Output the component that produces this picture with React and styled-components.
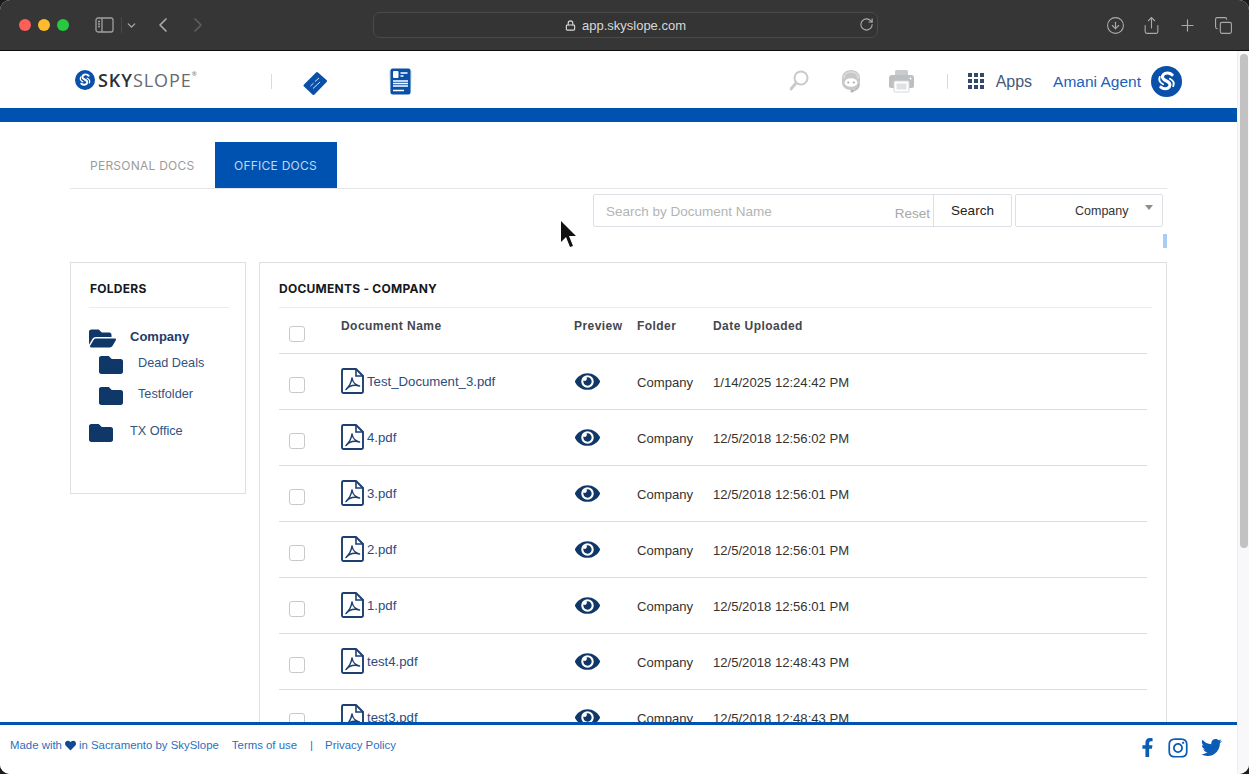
import React from 'react';
import styled, { createGlobalStyle } from 'styled-components';
import { FaEye, FaFolder, FaFolderOpen, FaHeart, FaFacebookF, FaInstagram, FaTwitter } from 'react-icons/fa';
import { ChevronDown, ChevronLeft, ChevronRight, RotateCw, Lock, CircleArrowDown, Share, Plus, Copy } from 'lucide-react';

const Global = createGlobalStyle`
  html, body { margin: 0; height: 100%; overflow: hidden; background: #1c1c1c; }
  #root { height: 100%; }
  * { box-sizing: border-box; }
  body { font-family: "Liberation Sans", Arial, sans-serif; }
`;

const Window = styled.div`
  position: relative;
  height: 774px;
  display: flex;
  flex-direction: column;
  border-radius: 10px;
  overflow: hidden;
  background: #fff;
`;

/* browser toolbar */
const Chrome = styled.div`
  height: 51px;
  flex: none;
  display: flex;
  align-items: center;
  background: #363636;
  border-bottom: 1px solid #0c0c0c;
  color: #a9a9a9;
`;
const ChromeLeft = styled.div`
  width: 373px;
  flex: none;
  display: flex;
  align-items: center;
  padding-left: 19px;
`;
const Light = styled.span`
  width: 12px;
  height: 12px;
  border-radius: 50%;
  margin-right: 7px;
  background: ${p => p.$c};
`;
const SidebarIcon = styled.svg`
  margin-left: 19px;
  width: 19px;
  height: 16px;
`;
const ChromeSep = styled.span`
  width: 1px;
  height: 16px;
  background: #484848;
  margin: 0 3px 0 7px;
`;
const Address = styled.div`
  width: 505px;
  height: 26px;
  flex: none;
  display: flex;
  align-items: center;
  justify-content: center;
  position: relative;
  gap: 6px;
  border: 1px solid #4a4a4a;
  border-radius: 7px;
  background: #343434;
  color: #d8d8d8;
  font-size: 13px;
`;
const Reload = styled.span`
  position: absolute;
  right: 3px;
  top: 4px;
  color: #b0b0b0;
`;
const ChromeRight = styled.div`
  flex: 1;
  display: flex;
  align-items: center;
  justify-content: flex-end;
  gap: 17px;
  padding-right: 16px;
`;

/* page + scrollbar */
const Viewport = styled.div`
  flex: 1;
  min-height: 0;
  display: flex;
`;
const Scrollbar = styled.div`
  width: 12px;
  flex: none;
  background: #f8f8fa;
  border-left: 1px solid #efeff2;
  padding: 3px 1px 0 2px;
`;
const Thumb = styled.div`
  height: 494px;
  border-radius: 5px;
  background: #c2c2c2;
`;
const Page = styled.div`
  flex: 1;
  min-width: 0;
  display: flex;
  flex-direction: column;
`;

/* app header */
const Header = styled.header`
  height: 57px;
  flex: none;
  display: flex;
  align-items: center;
  background: #fff;
  padding: 3px 55px 0 75px;
`;
const Logo = styled.div`
  width: 196px;
  display: flex;
  align-items: center;
  gap: 3px;
  margin-bottom: 3px;
`;
const LogoText = styled.span`
  font-family: "Open Sans", sans-serif;
  font-size: 18px;
  letter-spacing: 0.95px;
  color: #666a70;
  line-height: 1;
  b { font-weight: 600; color: #2b2f36; }
  sup { font-size: 6px; vertical-align: top; letter-spacing: 0; }
`;
const VSep = styled.span`
  width: 1px;
  height: 15px;
  background: #d8dbe2;
  flex: none;
`;
const NavIcon = styled.svg`
  flex: none;
  margin: ${p => p.$mt}px 0 0 ${p => p.$ml}px;
`;
const HeaderRight = styled.div`
  margin-left: auto;
  display: flex;
  align-items: center;
`;
const IconSlot = styled.span`
  display: flex;
  margin-right: ${p => p.$mr}px;
`;
const AppsGrid = styled.span`
  display: grid;
  grid-template-columns: repeat(3, 4px);
  grid-auto-rows: 4px;
  gap: 2px;
  margin: 0 12px 0 20px;
  i { background: #2f4a6d; display: block; }
`;
const AppsLabel = styled.span`
  font-size: 16px;
  color: #43597a;
  margin-right: 21px;
  padding-top: 1px;
`;
const UserName = styled.span`
  font-size: 15.5px;
  color: #1b61b8;
  margin-right: 10px;
  padding-top: 1px;
`;
const BlueBar = styled.div`
  height: 14px;
  flex: none;
  background: #0052b0;
`;

/* content */
const Main = styled.main`
  flex: 1;
  min-height: 0;
  overflow: hidden;
  padding: 20px 70px 0;
`;
const Tabs = styled.div`
  display: flex;
  height: 47px;
  border-bottom: 1px solid #e6e6e6;
`;
const Tab = styled.div`
  height: 46px;
  padding: 0 ${p => (p.$active ? 19.5 : 20)}px;
  display: flex;
  align-items: center;
  font-family: Inter, sans-serif;
  font-size: 12px;
  letter-spacing: 0.25px;
  color: ${p => (p.$active ? '#c4d6ee' : '#9b9b9b')};
  background: ${p => (p.$active ? '#0052b0' : 'transparent')};
`;
const SearchRow = styled.div`
  display: flex;
  justify-content: flex-end;
  gap: 3px;
  padding: 5px 4px 0 0;
`;
const SearchBox = styled.div`
  width: 419px;
  height: 33px;
  display: flex;
  border: 1px solid #dcdfe4;
  border-radius: 2px;
`;
const SearchInput = styled.div`
  flex: 1;
  position: relative;
  padding: 9px 0 0 12px;
  font-size: 13.5px;
  color: #b4b4b4;
`;
const Reset = styled.span`
  position: absolute;
  right: 3px;
  top: 11px;
  font-size: 13.5px;
  color: #a8a8a8;
`;
const SearchButton = styled.div`
  width: 78px;
  border-left: 1px solid #dcdfe4;
  display: flex;
  align-items: center;
  justify-content: center;
  font-size: 13.5px;
  color: #222;
  padding-bottom: 1px;
`;
const Select = styled.div`
  width: 148px;
  height: 33px;
  display: flex;
  align-items: center;
  padding-left: 59px;
  position: relative;
  border: 1px solid #dcdfe4;
  border-radius: 2px;
  font-size: 12.5px;
  color: #333;
  &::after {
    content: '';
    position: absolute;
    right: 9px;
    top: 10px;
    border: 4px solid transparent;
    border-top: 5px solid #8d8d8d;
  }
`;
const Marker = styled.div`
  width: 4px;
  height: 14px;
  margin: 7px 0 14px auto;
  background: #a9cdf5;
`;
const Columns = styled.div`
  display: flex;
  gap: 13px;
  align-items: flex-start;
`;
const FolderPanel = styled.aside`
  width: 176px;
  height: 232px;
  flex: none;
  padding: 0 16px 0 18px;
  border: 1px solid #dfdfe2;
`;
const PanelTitle = styled.h3`
  margin: 0;
  height: 45px;
  padding: 19px 0 0 1px;
  font-family: Inter, sans-serif;
  font-size: 12px;
  line-height: 14px;
  font-weight: 700;
  letter-spacing: 0.25px;
  color: #15181d;
  border-bottom: 1px solid #ececec;
`;
const FolderRow = styled.div`
  display: flex;
  align-items: center;
  margin-top: ${p => p.$mt}px;
  padding-left: ${p => p.$indent}px;
  color: #0f3868;
`;
const FolderSlot = styled.span`
  width: ${p => p.$w}px;
  flex: none;
  display: flex;
`;
const FolderLabel = styled.span`
  font-size: ${p => (p.$bold ? 13 : 12.7)}px;
  font-weight: ${p => (p.$bold ? 700 : 400)};
  color: ${p => (p.$bold ? '#1c3d6e' : '#33527f')};
  padding-bottom: 4px;
`;
const DocPanel = styled.section`
  flex: 1;
  min-width: 0;
  height: 521px;
  padding: 0 19px;
  border: 1px solid #dfdfe2;
`;
const DocTitle = styled(PanelTitle)`
  margin-right: -5px;
  padding-left: 0;
`;
const Row = styled.div`
  display: grid;
  grid-template-columns: 62px 233px 63px 76px 1fr;
  align-items: center;
  height: ${p => (p.$head ? 46 : 56)}px;
  border-bottom: 1px solid #d9dce8;
`;
const Check = styled.span`
  width: 16px;
  height: 16px;
  margin: 6px 0 0 10px;
  border: 1px solid #c9c9c9;
  border-radius: 3px;
  background: #fff;
`;
const HeadCell = styled.span`
  font-size: 12px;
  font-weight: 700;
  letter-spacing: 0.45px;
  color: #44474d;
  padding-bottom: 10px;
`;
const NameCell = styled.span`
  display: flex;
  align-items: center;
  gap: 3px;
  font-size: 13.2px;
  color: #2b4c7e;
`;
const Pdf = styled.svg`
  width: 23px;
  height: 26px;
  flex: none;
  margin-top: -1px;
`;
const TextLabel = styled.span`
  padding-bottom: 1px;
`;
const EyeCell = styled.span`
  display: flex;
  color: #0f3868;
  padding-left: 1px;
`;
const Cell = styled.span`
  font-size: 13.1px;
  color: #333;
  padding-top: 1px;
`;

/* footer */
const Footer = styled.footer`
  height: 52px;
  flex: none;
  display: flex;
  align-items: center;
  background: #fff;
  border-top: 3px solid #0052b0;
  padding: 0 15px 4px 10px;
  font-size: 11.4px;
  color: #2a6fc0;
`;
const FooterLink = styled.span`
  margin: 0 0 5px ${p => p.$ml || 0}px;
  display: flex;
  align-items: center;
  gap: 3px;
`;
const Social = styled.div`
  margin-left: auto;
  display: flex;
  align-items: center;
  gap: 12px;
  color: #0b5cb5;
`;
const FacebookSlot = styled.span`
  display: flex;
  margin-right: -2px;
`;

const Cursor = styled.svg`
  position: absolute;
  left: 560px;
  top: 220px;
  width: 17px;
  height: 28px;
`;

const docs = [
  ['Test_Document_3.pdf', '1/14/2025 12:24:42 PM'],
  ['4.pdf', '12/5/2018 12:56:02 PM'],
  ['3.pdf', '12/5/2018 12:56:01 PM'],
  ['2.pdf', '12/5/2018 12:56:01 PM'],
  ['1.pdf', '12/5/2018 12:56:01 PM'],
  ['test4.pdf', '12/5/2018 12:48:43 PM'],
  ['test3.pdf', '12/5/2018 12:48:43 PM'],
];

const PdfIcon = () => (
  <Pdf viewBox="0 0 23 26" fill="none" stroke="#1b3f70" strokeWidth="1.900">
    <path d="M2.500 1h12.500l7 7v15.500a1.500 1.500 0 0 1-1.500 1.500H2.500A1.500 1.500 0 0 1 1 23.500V2.500A1.500 1.500 0 0 1 2.500 1z" />
    <path d="M15 1v7h7" strokeWidth="1.600" />
    <path d="M11 10c-.5 4-3 8.500-6 11.500M11 10c.5 3.500 3.500 7 7.500 8M5 21.500c3-3.500 8-5 13.500-3.500" strokeWidth="1.500" strokeLinecap="round" />
  </Pdf>
);

const SLogo = ({ size }) => (
  <svg width={size} height={size} viewBox="0 0 30 30">
    <circle cx="15" cy="15" r="15" fill="#0a50a8" />
    <path d="M20.500 8.500c-2.500-2.300-6.500-2.300-8.500-.3-2 2.200-.8 4.600 2.500 6.100 3.300 1.500 5 3.800 3.200 6-1.800 2.200-5.700 2.300-8.200.2" fill="none" stroke="#fff" strokeWidth="3" strokeLinecap="round" />
    <path d="M8.500 10.500c-1.300 3 .3 5.700 3.200 7.200M21.500 19.500c1.300-3-.3-5.700-3.200-7.200" fill="none" stroke="#fff" strokeWidth="1.800" strokeLinecap="round" />
  </svg>
);

export default function App() {
  return (
    <Window>
      <Global />
      <Chrome>
        <ChromeLeft>
          <Light $c="#fe5f57" />
          <Light $c="#febb2e" />
          <Light $c="#28c840" />
          <SidebarIcon viewBox="0 0 19 16" fill="none" stroke="#a0a0a0" strokeWidth="1.300">
            <rect x="1" y="1" width="17" height="14" rx="2" />
            <path d="M7 1v14M3 4.500h2M3 7h2M3 9.500h2" />
          </SidebarIcon>
          <ChromeSep />
          <ChevronDown size={13} strokeWidth={2.4} />
          <ChevronLeft size={24} strokeWidth={1.7} style={{ marginLeft: 13 }} />
          <ChevronRight size={24} strokeWidth={1.7} color="#5e5e5e" style={{ marginLeft: 11 }} />
        </ChromeLeft>
        <Address>
          <Lock size={11} strokeWidth={2.5} />
          app.skyslope.com
          <Reload>
            <RotateCw size={15} strokeWidth={1.7} />
          </Reload>
        </Address>
        <ChromeRight>
          <CircleArrowDown size={19} strokeWidth={1.4} />
          <Share size={19} strokeWidth={1.4} />
          <Plus size={19} strokeWidth={1.5} />
          <Copy size={19} strokeWidth={1.4} />
        </ChromeRight>
      </Chrome>

      <Viewport>
        <Page>
          <Header>
            <Logo>
              <SLogo size={20} />
              <LogoText>
                <b>SKY</b>SLOPE<sup>®</sup>
              </LogoText>
            </Logo>
            <VSep />
            <NavIcon $ml={31} $mt={4} width="25" height="25" viewBox="0 0 25 25">
              <path d="M15 1.500l8.500 7.500a1.500 1.500 0 0 1 .1 2.100L11.500 23.500a1.500 1.500 0 0 1-2.100.1L1 15.500a1.500 1.500 0 0 1 0-2.100L13 1.500a1.500 1.500 0 0 1 2 0z" fill="#0a50a8" />
              <path d="M7.500 15l3-2.800M12 10.500l4-3.500M10 17.500l7-6.500" stroke="#cfe0f5" strokeWidth="1" />
            </NavIcon>
            <NavIcon $ml={60} $mt={1} width="25" height="27" viewBox="0 0 25 27">
              <path d="M1 3l2-.5v22l-1-.5zM24 3l-2-.5v22l1-.5z" fill="#dfe1e5" />
              <rect x="2.500" y="0.500" width="20" height="26" rx="2" fill="#0a50a8" />
              <rect x="5" y="3" width="5.500" height="7" rx="1" fill="#fff" />
              <path d="M12.500 5h7M12.500 8h3M5 13h15M5 15.500h15M5 18h15M5 22.500h11" stroke="#fff" strokeWidth="1.300" />
            </NavIcon>
            <HeaderRight>
              <IconSlot $mr={31}>
                <svg width="20" height="22" viewBox="0 0 20 22" fill="none" stroke="#c9c9c9">
                  <circle cx="12" cy="8" r="6.500" strokeWidth="2" />
                  <path d="M7 13l-5 6" strokeWidth="2.800" strokeLinecap="round" />
                </svg>
              </IconSlot>
              <IconSlot $mr={27}>
                <svg width="22" height="24" viewBox="0 0 22 24">
                  <path d="M11 1C5.500 1 2 4.500 2 9.500v3.500c0 4.800 3.500 8 9 8s9-3.200 9-8V9.500C20 4.500 16.500 1 11 1z" fill="#c8c8c8" />
                  <path d="M4 9.500C4 5.500 7 3 11 3s7 2.500 7 6.500" fill="none" stroke="#dedede" strokeWidth="1.500" />
                  <ellipse cx="11" cy="13.500" rx="6.500" ry="4.300" fill="#fff" />
                  <circle cx="8.300" cy="13.500" r="1.100" fill="#aaa" />
                  <circle cx="13.700" cy="13.500" r="1.100" fill="#aaa" />
                  <path d="M19 15c0 4-2.500 6-6 7" fill="none" stroke="#b8b8b8" strokeWidth="1.500" />
                  <circle cx="12" cy="22" r="1.500" fill="#b0b0b0" />
                </svg>
              </IconSlot>
              <IconSlot $mr={33}>
                <svg width="25" height="24" viewBox="0 0 25 24">
                  <rect x="6" y="1" width="13" height="6" rx="1.500" fill="#c9ccce" />
                  <path d="M3 6h19a3 3 0 0 1 3 3v8a2 2 0 0 1-2 2H2a2 2 0 0 1-2-2V9a3 3 0 0 1 3-3z" fill="#bcc0c3" />
                  <rect x="5" y="12" width="15" height="11" rx="1" fill="#fff" stroke="#d5d7d9" />
                  <rect x="7.500" y="14.500" width="10" height="6" fill="#dfe1e3" />
                  <circle cx="21.500" cy="9.500" r="1" fill="#fff" />
                </svg>
              </IconSlot>
              <VSep />
              <AppsGrid>
                {Array.from({ length: 9 }).map((_, i) => (
                  <i key={i} />
                ))}
              </AppsGrid>
              <AppsLabel>Apps</AppsLabel>
              <UserName>Amani Agent</UserName>
              <SLogo size={31} />
            </HeaderRight>
          </Header>
          <BlueBar />

          <Main>
            <Tabs>
              <Tab>PERSONAL DOCS</Tab>
              <Tab $active>OFFICE DOCS</Tab>
            </Tabs>
            <SearchRow>
              <SearchBox>
                <SearchInput>
                  Search by Document Name
                  <Reset>Reset</Reset>
                </SearchInput>
                <SearchButton>Search</SearchButton>
              </SearchBox>
              <Select>Company</Select>
            </SearchRow>
            <Marker />
            <Columns>
              <FolderPanel>
                <PanelTitle>FOLDERS</PanelTitle>
                <FolderRow $mt={17} $indent={0}>
                  <FolderSlot $w={41}>
                    <FaFolderOpen size={27} />
                  </FolderSlot>
                  <FolderLabel $bold>Company</FolderLabel>
                </FolderRow>
                <FolderRow $mt={1} $indent={10}>
                  <FolderSlot $w={39}>
                    <FaFolder size={24} />
                  </FolderSlot>
                  <FolderLabel>Dead Deals</FolderLabel>
                </FolderRow>
                <FolderRow $mt={7} $indent={10}>
                  <FolderSlot $w={39}>
                    <FaFolder size={24} />
                  </FolderSlot>
                  <FolderLabel>Testfolder</FolderLabel>
                </FolderRow>
                <FolderRow $mt={13} $indent={0}>
                  <FolderSlot $w={41}>
                    <FaFolder size={24} />
                  </FolderSlot>
                  <FolderLabel>TX Office</FolderLabel>
                </FolderRow>
              </FolderPanel>
              <DocPanel>
                <DocTitle>DOCUMENTS - COMPANY</DocTitle>
                <Row $head>
                  <Check />
                  <HeadCell>Document Name</HeadCell>
                  <HeadCell>Preview</HeadCell>
                  <HeadCell>Folder</HeadCell>
                  <HeadCell>Date Uploaded</HeadCell>
                </Row>
                {docs.map(([name, date]) => (
                  <Row key={name}>
                    <Check />
                    <NameCell>
                      <PdfIcon />
                      <TextLabel>{name}</TextLabel>
                    </NameCell>
                    <EyeCell>
                      <FaEye size={25} />
                    </EyeCell>
                    <Cell>Company</Cell>
                    <Cell>{date}</Cell>
                  </Row>
                ))}
              </DocPanel>
            </Columns>
          </Main>

          <Footer>
            <FooterLink>
              Made with <FaHeart size={11} color="#0f4a94" /> in Sacramento by SkySlope
            </FooterLink>
            <FooterLink $ml={13}>Terms of use</FooterLink>
            <FooterLink $ml={13}>|</FooterLink>
            <FooterLink $ml={12}>Privacy Policy</FooterLink>
            <Social>
              <FacebookSlot>
                <FaFacebookF size={19} />
              </FacebookSlot>
              <FaInstagram size={22} />
              <FaTwitter size={21} />
            </Social>
          </Footer>
        </Page>
        <Scrollbar>
          <Thumb />
        </Scrollbar>
      </Viewport>

      <Cursor viewBox="0 0 17 28">
        <path d="M1 1v21l5-5 4 10 3-1-4-10h7z" fill="#111" />
      </Cursor>
    </Window>
  );
}
